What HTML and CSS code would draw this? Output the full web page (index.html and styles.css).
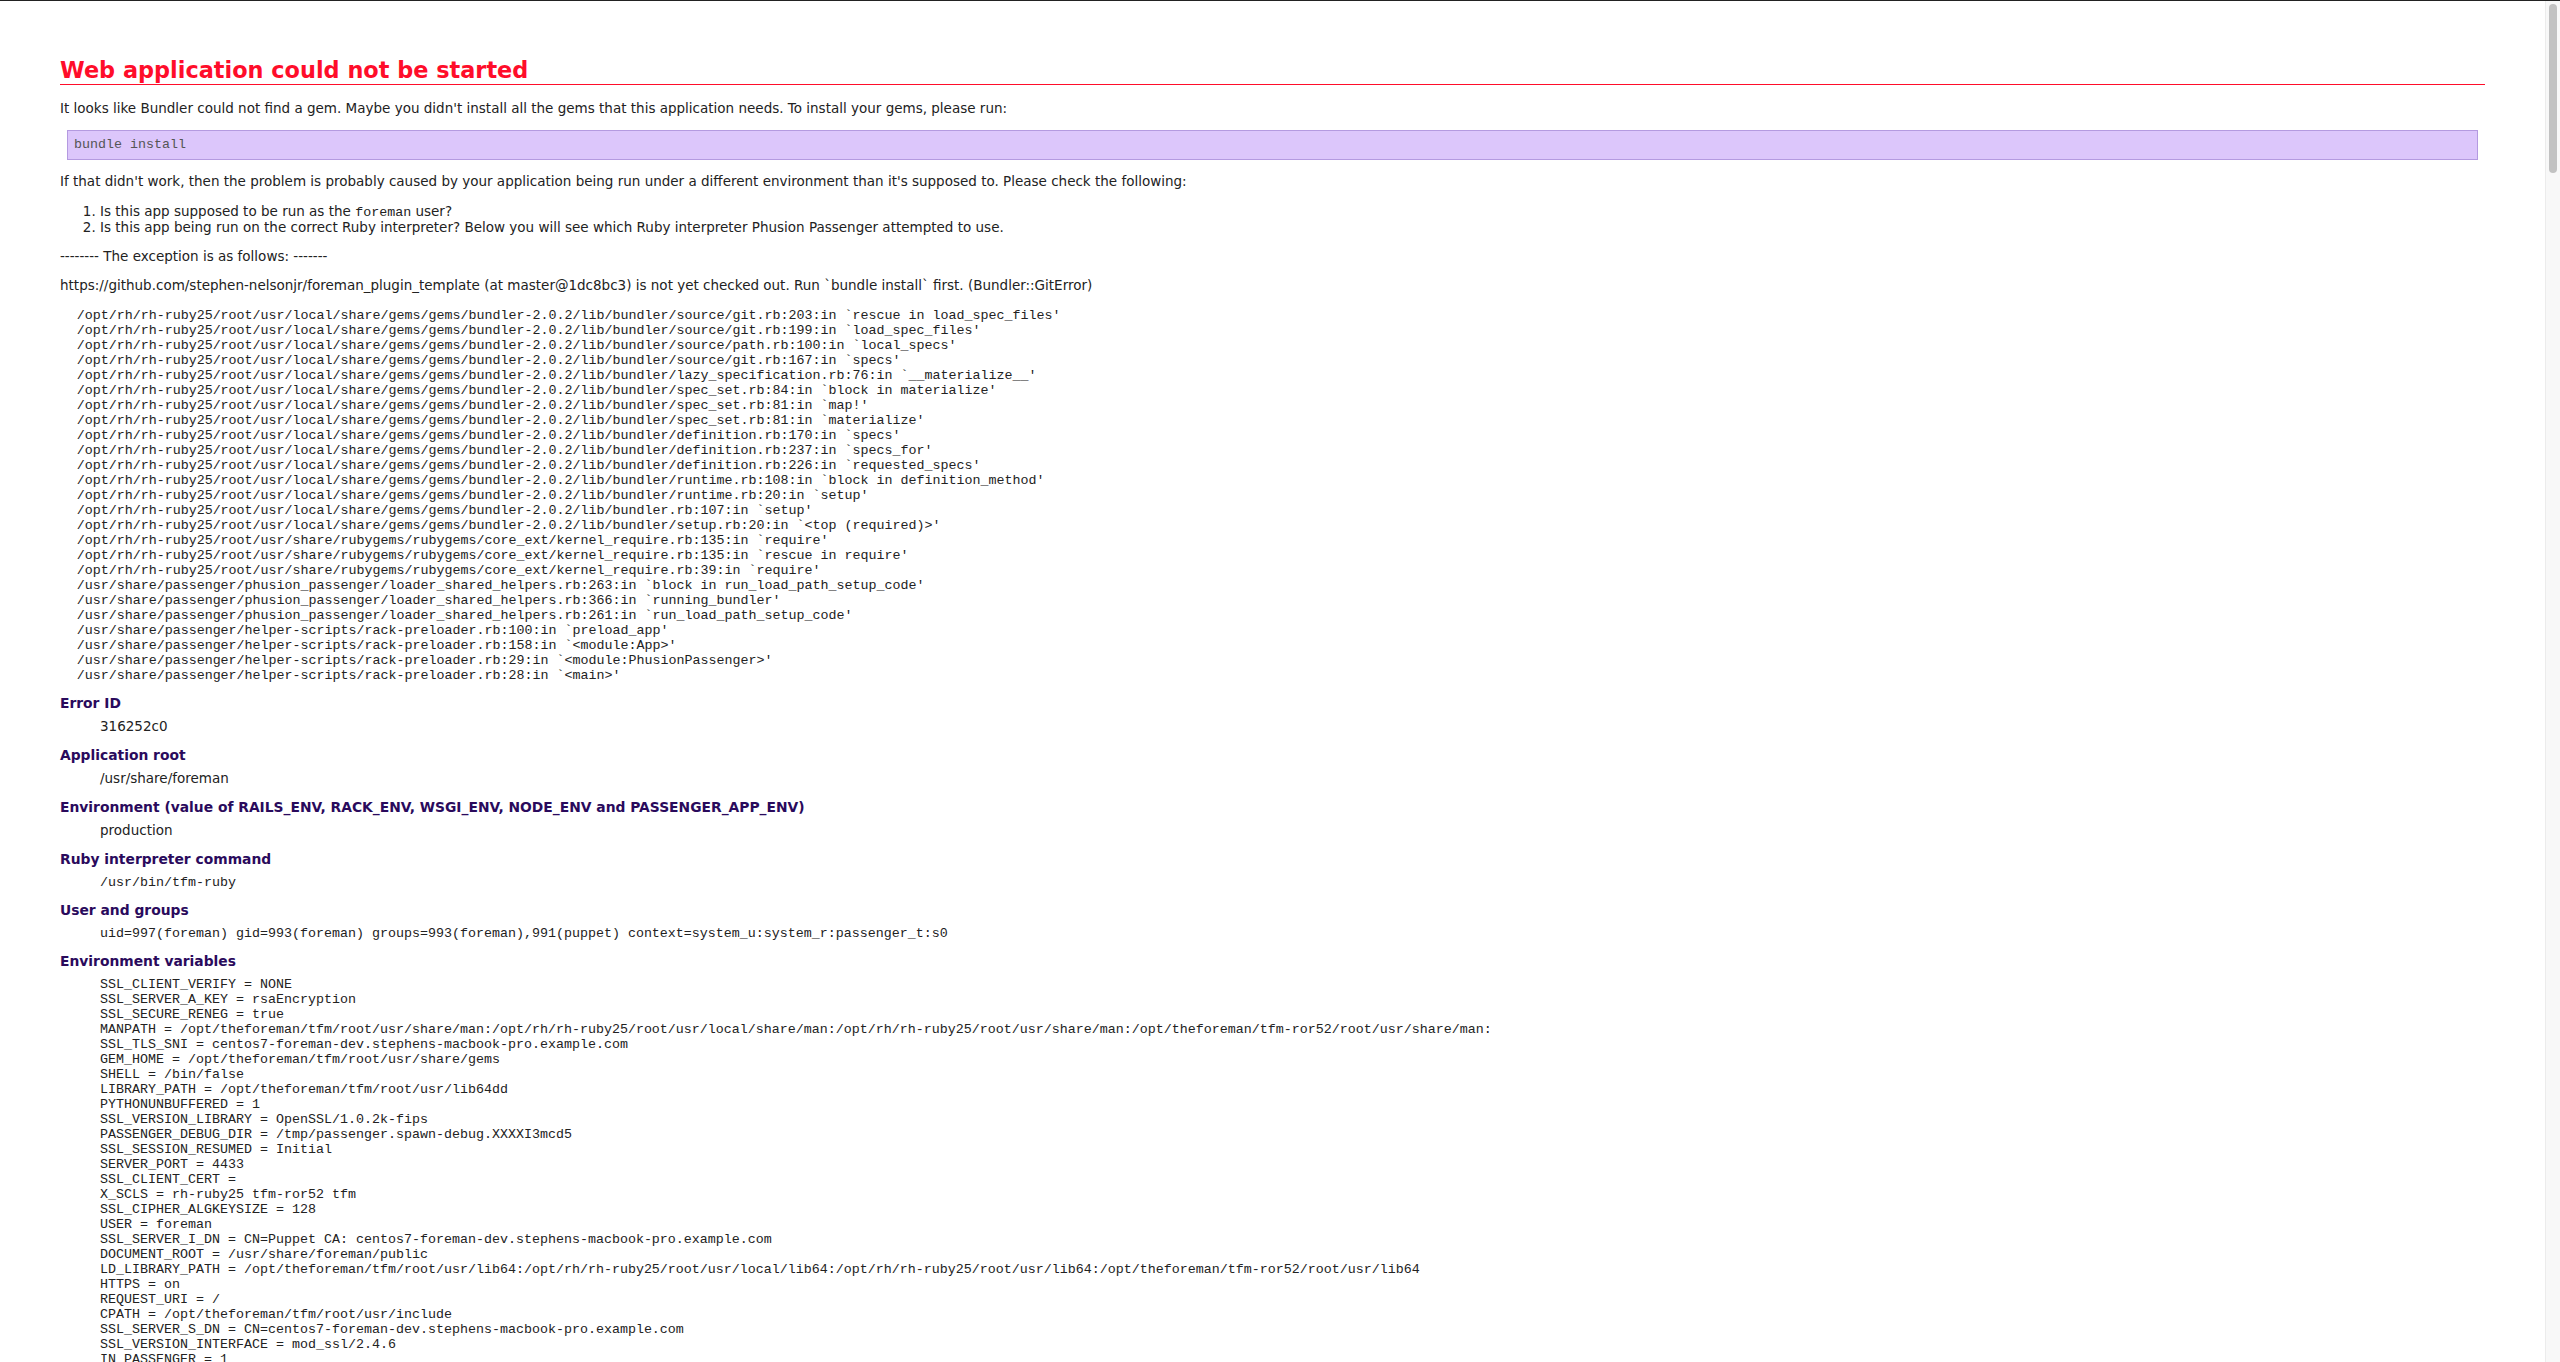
FILE: index.html
```html
<!DOCTYPE html>
<html lang="en">
<head>
<meta charset="utf-8">
<title>Web application could not be started</title>
<link rel="stylesheet" href="styles.css">
</head>
<body>
<div class="window">
<main class="page">
<h1 class="title">Web application could not be started</h1>
<p class="para">It looks like Bundler could not find a gem. Maybe you didn't install all the gems that this application needs. To install your gems, please run:</p>
<pre class="command">bundle install</pre>
<p class="para">If that didn't work, then the problem is probably caused by your application being run under a different environment than it's supposed to. Please check the following:</p>
<ol class="checks">
<li>Is this app supposed to be run as the <code class="inline">foreman</code> user?</li>
<li>Is this app being run on the correct Ruby interpreter? Below you will see which Ruby interpreter Phusion Passenger attempted to use.</li>
</ol>
<p class="para">-------- The exception is as follows: -------</p>
<p class="para">https://github.com/stephen-nelsonjr/foreman_plugin_template (at master@1dc8bc3) is not yet checked out. Run `bundle install` first. (Bundler::GitError)</p>
<pre class="trace">/opt/rh/rh-ruby25/root/usr/local/share/gems/gems/bundler-2.0.2/lib/bundler/source/git.rb:203:in `rescue in load_spec_files'
/opt/rh/rh-ruby25/root/usr/local/share/gems/gems/bundler-2.0.2/lib/bundler/source/git.rb:199:in `load_spec_files'
/opt/rh/rh-ruby25/root/usr/local/share/gems/gems/bundler-2.0.2/lib/bundler/source/path.rb:100:in `local_specs'
/opt/rh/rh-ruby25/root/usr/local/share/gems/gems/bundler-2.0.2/lib/bundler/source/git.rb:167:in `specs'
/opt/rh/rh-ruby25/root/usr/local/share/gems/gems/bundler-2.0.2/lib/bundler/lazy_specification.rb:76:in `__materialize__'
/opt/rh/rh-ruby25/root/usr/local/share/gems/gems/bundler-2.0.2/lib/bundler/spec_set.rb:84:in `block in materialize'
/opt/rh/rh-ruby25/root/usr/local/share/gems/gems/bundler-2.0.2/lib/bundler/spec_set.rb:81:in `map!'
/opt/rh/rh-ruby25/root/usr/local/share/gems/gems/bundler-2.0.2/lib/bundler/spec_set.rb:81:in `materialize'
/opt/rh/rh-ruby25/root/usr/local/share/gems/gems/bundler-2.0.2/lib/bundler/definition.rb:170:in `specs'
/opt/rh/rh-ruby25/root/usr/local/share/gems/gems/bundler-2.0.2/lib/bundler/definition.rb:237:in `specs_for'
/opt/rh/rh-ruby25/root/usr/local/share/gems/gems/bundler-2.0.2/lib/bundler/definition.rb:226:in `requested_specs'
/opt/rh/rh-ruby25/root/usr/local/share/gems/gems/bundler-2.0.2/lib/bundler/runtime.rb:108:in `block in definition_method'
/opt/rh/rh-ruby25/root/usr/local/share/gems/gems/bundler-2.0.2/lib/bundler/runtime.rb:20:in `setup'
/opt/rh/rh-ruby25/root/usr/local/share/gems/gems/bundler-2.0.2/lib/bundler.rb:107:in `setup'
/opt/rh/rh-ruby25/root/usr/local/share/gems/gems/bundler-2.0.2/lib/bundler/setup.rb:20:in `&lt;top (required)&gt;'
/opt/rh/rh-ruby25/root/usr/share/rubygems/rubygems/core_ext/kernel_require.rb:135:in `require'
/opt/rh/rh-ruby25/root/usr/share/rubygems/rubygems/core_ext/kernel_require.rb:135:in `rescue in require'
/opt/rh/rh-ruby25/root/usr/share/rubygems/rubygems/core_ext/kernel_require.rb:39:in `require'
/usr/share/passenger/phusion_passenger/loader_shared_helpers.rb:263:in `block in run_load_path_setup_code'
/usr/share/passenger/phusion_passenger/loader_shared_helpers.rb:366:in `running_bundler'
/usr/share/passenger/phusion_passenger/loader_shared_helpers.rb:261:in `run_load_path_setup_code'
/usr/share/passenger/helper-scripts/rack-preloader.rb:100:in `preload_app'
/usr/share/passenger/helper-scripts/rack-preloader.rb:158:in `&lt;module:App&gt;'
/usr/share/passenger/helper-scripts/rack-preloader.rb:29:in `&lt;module:PhusionPassenger&gt;'
/usr/share/passenger/helper-scripts/rack-preloader.rb:28:in `&lt;main&gt;'</pre>
<dl class="details">
<dt>Error ID</dt>
<dd>316252c0</dd>
<dt>Application root</dt>
<dd>/usr/share/foreman</dd>
<dt>Environment (value of RAILS_ENV, RACK_ENV, WSGI_ENV, NODE_ENV and PASSENGER_APP_ENV)</dt>
<dd>production</dd>
<dt>Ruby interpreter command</dt>
<dd class="mono">/usr/bin/tfm-ruby</dd>
<dt>User and groups</dt>
<dd class="mono">uid=997(foreman) gid=993(foreman) groups=993(foreman),991(puppet) context=system_u:system_r:passenger_t:s0</dd>
<dt>Environment variables</dt>
<dd class="mono"><pre class="vars">SSL_CLIENT_VERIFY = NONE
SSL_SERVER_A_KEY = rsaEncryption
SSL_SECURE_RENEG = true
MANPATH = /opt/theforeman/tfm/root/usr/share/man:/opt/rh/rh-ruby25/root/usr/local/share/man:/opt/rh/rh-ruby25/root/usr/share/man:/opt/theforeman/tfm-ror52/root/usr/share/man:
SSL_TLS_SNI = centos7-foreman-dev.stephens-macbook-pro.example.com
GEM_HOME = /opt/theforeman/tfm/root/usr/share/gems
SHELL = /bin/false
LIBRARY_PATH = /opt/theforeman/tfm/root/usr/lib64dd
PYTHONUNBUFFERED = 1
SSL_VERSION_LIBRARY = OpenSSL/1.0.2k-fips
PASSENGER_DEBUG_DIR = /tmp/passenger.spawn-debug.XXXXI3mcd5
SSL_SESSION_RESUMED = Initial
SERVER_PORT = 4433
SSL_CLIENT_CERT =
X_SCLS = rh-ruby25 tfm-ror52 tfm
SSL_CIPHER_ALGKEYSIZE = 128
USER = foreman
SSL_SERVER_I_DN = CN=Puppet CA: centos7-foreman-dev.stephens-macbook-pro.example.com
DOCUMENT_ROOT = /usr/share/foreman/public
LD_LIBRARY_PATH = /opt/theforeman/tfm/root/usr/lib64:/opt/rh/rh-ruby25/root/usr/local/lib64:/opt/rh/rh-ruby25/root/usr/lib64:/opt/theforeman/tfm-ror52/root/usr/lib64
HTTPS = on
REQUEST_URI = /
CPATH = /opt/theforeman/tfm/root/usr/include
SSL_SERVER_S_DN = CN=centos7-foreman-dev.stephens-macbook-pro.example.com
SSL_VERSION_INTERFACE = mod_ssl/2.4.6
IN_PASSENGER = 1</pre></dd>
</dl>
</main>
<aside class="scrollbar"><div class="thumb"></div></aside>
</div>
</body>
</html>
```

FILE: styles.css
```css
html, body {
  margin: 0;
  padding: 0;
  height: 100%;
  overflow: hidden;
  background: #fff;
}

.window {
  display: flex;
  height: 1362px;
  box-sizing: border-box;
  border-top: 1px solid #222;
  overflow: hidden;
  font-family: "DejaVu Sans", Verdana, sans-serif;
  font-size: 13.5px;
  line-height: 16px;
  color: #222;
}

.page {
  flex: 1;
  min-width: 0;
  padding: 0 60px;
  overflow: hidden;
}

.title {
  margin: 56px 0 15px;
  padding-bottom: 1px;
  border-bottom: 1px solid #ff0d2a;
  font-size: 22.4px;
  line-height: 26px;
  font-weight: bold;
  color: #ff0d2a;
}

.para {
  margin: 13px 0;
}

.command {
  margin: 14px 7px 13px;
  padding: 7px 6px;
  height: 14px;
  border: 1px solid #b49ae0;
  background: #dcc6fb;
  font-family: "Liberation Mono", "Courier New", monospace;
  font-size: 13.33px;
  line-height: 14px;
  color: #555;
}

.checks {
  margin: 14px 0 13px;
  padding-left: 40px;
}

.inline {
  font-family: "Liberation Mono", "Courier New", monospace;
  font-size: 13.33px;
  line-height: 1;
}

.trace {
  margin: 15px 0 0 16.67px;
  font-family: "Liberation Mono", "Courier New", monospace;
  font-size: 13.33px;
  line-height: 15px;
  color: #222;
}

.details {
  margin: 0;
}

.details dt {
  margin-top: 13px;
  font-size: 13.85px;
  font-weight: bold;
  color: #2a0a5c;
}

.details dt:first-child {
  margin-top: 12px;
}

.details dd {
  margin: 7px 0 0 40px;
}

.details dd.mono {
  margin-top: 8px;
  font-family: "Liberation Mono", "Courier New", monospace;
  font-size: 13.33px;
  line-height: 15px;
}

.details dd.mono + dt {
  margin-top: 12px;
}

.vars {
  margin: 0;
  font: inherit;
}

.scrollbar {
  flex: none;
  width: 15px;
  box-sizing: border-box;
  padding: 3px 3px 0 3px;
  background: #f8f8f8;
  border-left: 1px solid #ececec;
}

.thumb {
  width: 8px;
  height: 169px;
  border-radius: 4px;
  background: #c2c2c2;
}
```
